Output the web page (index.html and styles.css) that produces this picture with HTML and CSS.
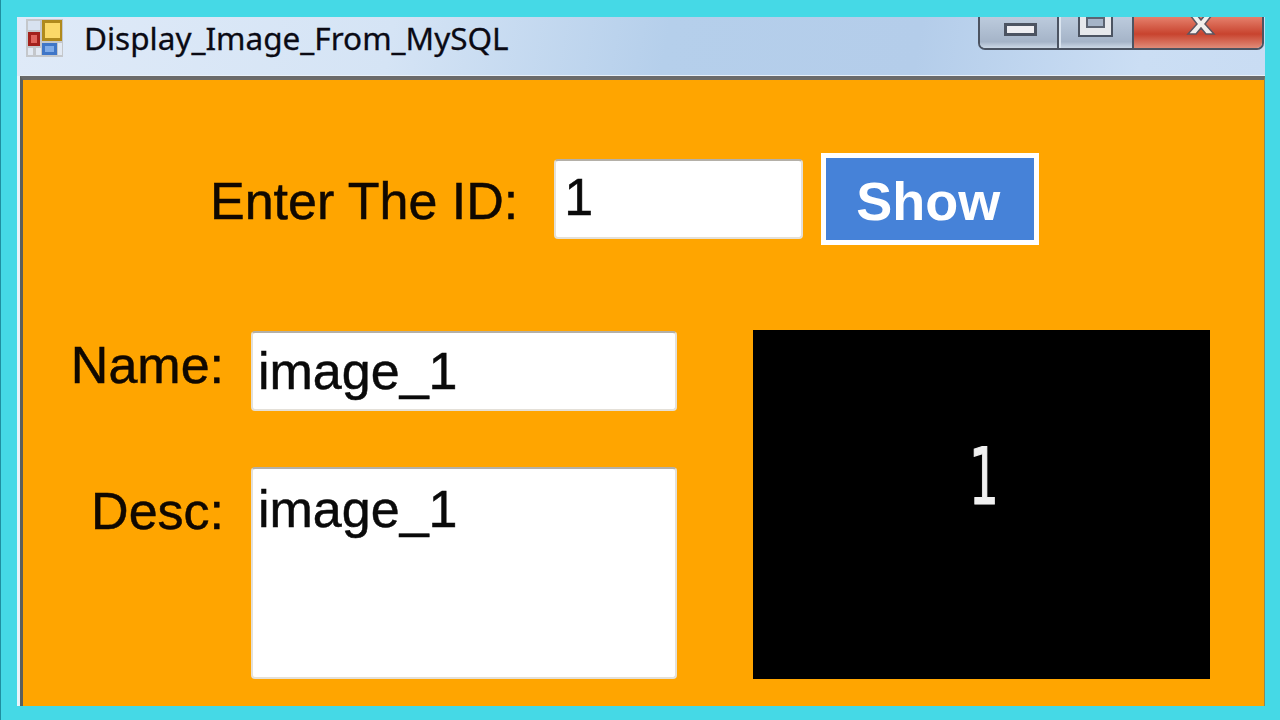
FILE: index.html
```html
<!DOCTYPE html>
<html lang="en">
<head>
    <meta charset="UTF-8">
    <title>Display_Image_From_MySQL</title>
    <link rel="stylesheet" href="styles.css">
</head>
<body>

    <div class="window">
        <div class="titlebar">
            <svg class="app-icon" width="37" height="38" viewBox="0 0 37 38">
                <rect x="0" y="0" width="37" height="38" fill="#c4c7cb"/>
                <rect x="2" y="2" width="12" height="9" fill="#d8e2f0"/>
                <rect x="2" y="13" width="12" height="14" fill="#a3211c"/>
                <rect x="5" y="16" width="6" height="8" fill="#e0645c"/>
                <rect x="2" y="29" width="5" height="7" fill="#e2e9f3"/>
                <rect x="10" y="29" width="5" height="7" fill="#e2e9f3"/>
                <rect x="16" y="1" width="20" height="21" fill="#b08a1c"/>
                <rect x="19" y="4" width="15" height="15" fill="#fbd968"/>
                <rect x="16" y="24" width="15" height="12" fill="#3f76c8"/>
                <rect x="19" y="27" width="9" height="6" fill="#7fabe8"/>
                <rect x="32" y="24" width="4" height="12" fill="#e2e9f3"/>
            </svg>
            <span class="title">Display_Image_From_MySQL</span>
            <div class="window-buttons">
                <div class="win-btn min-btn"><span class="min-glyph"></span></div>
                <div class="win-btn max-btn"><span class="max-glyph"></span></div>
                <div class="win-btn close-btn">
                    <svg width="30" height="20" viewBox="0 0 30 20">
                        <path d="M4 0 L11 0 L15 5 L19 0 L26 0 L19 9 L28 19 L20 19 L15 13 L10 19 L2 19 L11 9 Z" fill="#f2eeec" stroke="#5c5560" stroke-width="1.5"/>
                    </svg>
                </div>
            </div>
        </div>

        <div class="form">
            <div class="id-row">
                <label class="field-label id-label">Enter The ID:</label>
                <input class="text-box id-box" type="text" value="1">
                <button class="show-button">Show</button>
            </div>

            <div class="details">
                <div class="fields">
                    <label class="field-label name-label">Name:</label>
                    <input class="text-box name-box" type="text" value="image_1">
                    <label class="field-label desc-label">Desc:</label>
                    <textarea class="text-box desc-box">image_1</textarea>
                </div>
                <div class="picture"><span class="picture-digit">1</span></div>
            </div>
        </div>
    </div>

</body>
</html>
```

FILE: styles.css
```css
* {
    box-sizing: border-box;
}

html, body {
    height: 100%;
}

body {
    margin: 0;
    padding: 17px 15px 14px 17px;
    background-color: #45d9e6;
    border-left: 1px solid #1f8fa0;
    overflow: hidden;
    font-family: 'Liberation Sans', Arial, sans-serif;
}

.window {
    height: 100%;
    margin-left: -1px;
    display: flex;
    flex-direction: column;
}

.titlebar {
    height: 59px;
    flex-shrink: 0;
    display: flex;
    align-items: flex-start;
    padding: 2px 1px 0 9px;
    background: linear-gradient(100deg, #dfeaf8 0%, #d5e4f5 30%, #b5cfeb 52%, #b4cdea 72%, #cbdef4 90%, #c9dcf3 100%);
    overflow: hidden;
}

.app-icon {
    flex-shrink: 0;
}

.title {
    margin: 1px 0 0 21px;
    font-family: 'Noto Sans', sans-serif;
    font-size: 31.5px;
    line-height: 36px;
    color: #0a0a14;
    -webkit-text-stroke: 0.3px #0a0a14;
}

.window-buttons {
    display: flex;
    margin: -2px 0 0 auto;
    height: 33px;
    border: 2px solid #4c5462;
    border-top: none;
    border-radius: 0 0 7px 7px;
    overflow: hidden;
}

.win-btn {
    display: flex;
    justify-content: center;
    align-items: flex-end;
    padding-bottom: 12px;
    border-right: 2px solid #4c5462;
    background: linear-gradient(180deg, #bccbdd 0%, #a5b4c8 80%, #ccd8e6 100%);
}

.min-btn {
    width: 79px;
    padding-left: 4px;
}

.max-btn {
    width: 75px;
    box-shadow: inset 2px 0 0 #dbe5f0;
}

.close-btn {
    width: 128px;
    padding-left: 6px;
    border-right: none;
    background: linear-gradient(180deg, #e5806c 0%, #c8432e 55%, #e08b78 100%);
}

.close-btn svg {
    margin-bottom: 1px;
}

.min-glyph {
    display: block;
    width: 33px;
    height: 13px;
    background-color: #eeeef2;
    border: 3px solid #4c5462;
}

.max-glyph {
    display: block;
    width: 33px;
    height: 22px;
    background-color: #a5b4c8;
    border-style: solid;
    border-color: #e6e8ec;
    border-width: 3px 7px 8px;
    outline: 2px solid #4c5462;
    outline-offset: -1px;
    box-shadow: inset 0 0 0 2px #5c6472;
}

.form {
    flex: 1;
    min-height: 0;
    padding: 73px 0 0 43px;
    margin-left: 3px;
    background-color: #ffa500;
    border-top: 4px solid #6a6a6a;
    border-left: 3px solid #5c5f5c;
    border-right: 1px solid #8a8a5a;
    box-shadow: -3px 0 0 #e8f4fa, 0 -1px 0 #e8f0f8;
}

.field-label {
    font-size: 52px;
    line-height: 60px;
    color: #100800;
    white-space: nowrap;
    -webkit-text-stroke: 0.5px #100800;
}

.id-row {
    display: flex;
    align-items: center;
    height: 92px;
    padding-left: 144px;
}

.id-label {
    margin-top: 4px;
}

.text-box {
    display: block;
    margin: 0;
    padding: 0 5px;
    font-family: 'Liberation Sans', Arial, sans-serif;
    font-size: 52px;
    color: #0a0a0a;
    background-color: #fff;
    border: 2px solid #e4e0d8;
    border-top-color: #b4b0a8;
    border-radius: 4px;
    outline: none;
    resize: none;
    overflow: hidden;
    -webkit-text-stroke: 0.5px #0a0a0a;
}

.id-box {
    width: 249px;
    height: 80px;
    margin-left: 36px;
    padding: 0 0 4px 8px;
}

.show-button {
    width: 218px;
    height: 92px;
    margin-left: 18px;
    padding: 3px 4px 0 0;
    font-family: 'Liberation Sans', Arial, sans-serif;
    font-size: 54px;
    font-weight: bold;
    color: #fff;
    background-color: #4682d8;
    border: 5px solid #fff;
}

.details {
    display: flex;
    align-items: flex-start;
    margin-top: 85px;
}

.fields {
    display: grid;
    grid-template-columns: 158px 426px;
    column-gap: 27px;
    row-gap: 56px;
    margin-top: 1px;
}

.name-label,
.desc-label {
    justify-self: end;
}

.name-label {
    margin-top: 4px;
}

.desc-label {
    margin-top: 14px;
}

.name-box {
    width: 100%;
    height: 80px;
}

.desc-box {
    width: 100%;
    height: 212px;
    line-height: 60px;
    padding-top: 10px;
}

.picture {
    width: 457px;
    height: 349px;
    margin-left: 76px;
    padding: 0 0 56px 4px;
    display: flex;
    justify-content: center;
    align-items: center;
    background-color: #000;
    color: #f0f0f0;
}

.picture-digit {
    display: inline-block;
    font-family: 'DejaVu Sans', sans-serif;
    font-size: 78px;
    line-height: 1;
    transform: scaleX(0.6);
    -webkit-text-stroke: 1.2px #f0f0f0;
}
```
